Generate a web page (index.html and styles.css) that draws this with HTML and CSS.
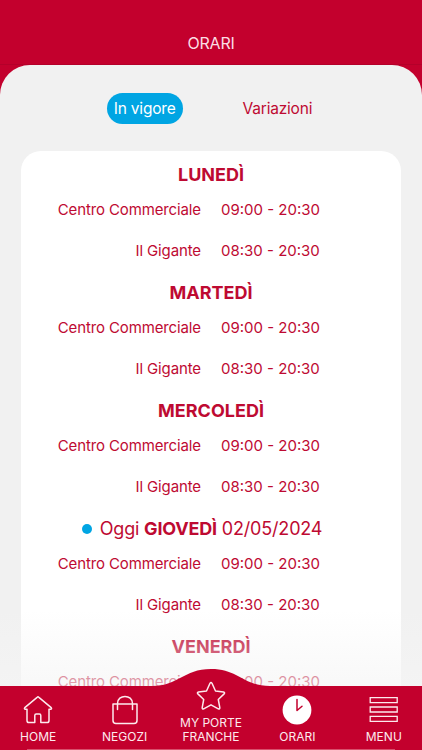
FILE: index.html
```html
<!DOCTYPE html>
<html lang="it">
<head>
    <meta charset="UTF-8">
    <meta name="viewport" content="width=device-width, initial-scale=1.0">
    <title>Orari</title>
    <link rel="stylesheet" href="styles.css">
</head>
<body>
    <header class="header">
        <h1>ORARI</h1>
    </header>
    <main class="content">
        <div class="tabs">
            <button class="tab active">In vigore</button>
            <button class="tab">Variazioni</button>
        </div>
        <div class="card">
            <section class="day">
                <h2>LUNEDÌ</h2>
                <div class="row"><span class="place">Centro Commerciale</span><span class="time">09:00 - 20:30</span></div>
                <div class="row"><span class="place">Il Gigante</span><span class="time">08:30 - 20:30</span></div>
            </section>
            <section class="day">
                <h2>MARTEDÌ</h2>
                <div class="row"><span class="place">Centro Commerciale</span><span class="time">09:00 - 20:30</span></div>
                <div class="row"><span class="place">Il Gigante</span><span class="time">08:30 - 20:30</span></div>
            </section>
            <section class="day">
                <h2>MERCOLEDÌ</h2>
                <div class="row"><span class="place">Centro Commerciale</span><span class="time">09:00 - 20:30</span></div>
                <div class="row"><span class="place">Il Gigante</span><span class="time">08:30 - 20:30</span></div>
            </section>
            <section class="day">
                <h2 class="today"><span class="dot"></span><span>Oggi <b>GIOVEDÌ</b> 02/05/2024</span></h2>
                <div class="row"><span class="place">Centro Commerciale</span><span class="time">09:00 - 20:30</span></div>
                <div class="row"><span class="place">Il Gigante</span><span class="time">08:30 - 20:30</span></div>
            </section>
            <section class="day">
                <h2>VENERDÌ</h2>
                <div class="row"><span class="place">Centro Commerciale</span><span class="time">09:00 - 20:30</span></div>
            </section>
        </div>
        <div class="fade"></div>
    </main>
    <nav class="navbar">
        <svg class="hump" width="118" height="19" viewBox="0 0 118 19">
            <path d="M0 19V18C27 18 31 1 59 1S91 18 118 18V19Z" fill="#c3002d"/>
        </svg>
        <div class="nav-items">
            <a class="nav-item">
                <svg width="30" height="30" viewBox="0 0 30 30">
                    <path d="M14.1 2.3 1.8 12.6Q.8 14 2.5 14.2H4V25.5Q4 27.6 6 27.6H11.8V20.5Q11.8 19 13.2 19H16.4Q17.8 19 17.8 20.5V27.6H24Q26 27.6 26 25.5V14.2H27.5Q29.2 14 28.2 12.6L15.9 2.3Q15 1.5 14.1 2.3Z"/>
                </svg>
                <span>HOME</span>
            </a>
            <a class="nav-item">
                <svg width="30" height="30" viewBox="0 0 30 30">
                    <path d="M3 9H27V25.5Q27 28.5 24 28.5H6Q3 28.5 3 25.5ZM7.5 14.5V8.5C7.5 -1 22.5 -1 22.5 8.5V14.5"/>
                </svg>
                <span>NEGOZI</span>
            </a>
            <a class="nav-item">
                <svg width="30" height="30" viewBox="0 0 30 30">
                    <path d="M14 2.3Q15 .6 16 2.3L19.5 10 27.5 11.1Q29.3 11.5 28.1 12.9L22.3 18.5 23.8 26.7Q23.9 28.5 22.3 27.8L15 23.8 7.7 27.8Q6.1 28.5 6.2 26.7L7.7 18.5 1.9 12.9Q.7 11.5 2.5 11.1L10.5 10Z"/>
                </svg>
                <span>MY PORTE<br>FRANCHE</span>
            </a>
            <a class="nav-item">
                <svg width="30" height="30" viewBox="0 0 30 30">
                    <circle cx="15" cy="15" r="14.4" class="clock-face"/>
                    <path d="M15 4.5V15.5L20 11.2" class="clock-hands"/>
                </svg>
                <span>ORARI</span>
            </a>
            <a class="nav-item">
                <svg width="30" height="30" viewBox="0 0 30 30">
                    <path class="bars" d="M1.2 2.7H28.2V7.7H1.2ZM1.2 12H28.2V17H1.2ZM1.2 21.3H28.2V26.3H1.2Z"/>
                </svg>
                <span>MENU</span>
            </a>
        </div>
    </nav>
</body>
</html>
```

FILE: styles.css
```css
* {
    box-sizing: border-box;
}
body {
    font-family: Inter, "Liberation Sans", sans-serif;
    background-color: #c3002d;
    color: #be0a32;
    display: flex;
    flex-direction: column;
    height: 100vh;
    margin: 0;
    overflow: hidden;
}
.header {
    height: 65px;
    flex: none;
    padding-top: 33px;
    text-align: center;
    color: #fbdde3;
    border-bottom: 1px solid #b4002a;
}
.header h1 {
    margin: 0;
    font-size: 16px;
    font-weight: 400;
    line-height: 21px;
    letter-spacing: -0.2px;
}
.content {
    position: relative;
    flex: 1;
    min-height: 0;
    overflow: hidden;
    background-color: #f1f1f1;
    border-radius: 30px 30px 0 0;
    padding: 28px 21px 0;
}
.tabs {
    display: flex;
    justify-content: center;
    gap: 53px;
    margin-bottom: 27px;
    padding-left: 4px;
}
.tab {
    font-family: inherit;
    font-size: 15.5px;
    letter-spacing: -0.2px;
    line-height: 31px;
    height: 31px;
    padding: 0 7px;
    border: none;
    border-radius: 16px;
    background: none;
    color: #be0a32;
    cursor: pointer;
}
.tab.active {
    background-color: #00a5e3;
    color: white;
}
.card {
    background-color: white;
    border-radius: 20px;
    padding-top: 9px;
    height: 620px;
}
.day {
    margin-bottom: 7px;
}
.day h2 {
    margin: 0;
    font-size: 18px;
    font-weight: 700;
    line-height: 29px;
    text-align: center;
}
.day h2.today {
    display: flex;
    justify-content: center;
    align-items: center;
    gap: 8px;
    font-weight: 400;
    letter-spacing: -0.18px;
    padding-right: 18px;
}
.dot {
    width: 10px;
    height: 10px;
    border-radius: 50%;
    background-color: #00a5e3;
}
.row {
    display: grid;
    grid-template-columns: 180px 1fr;
    gap: 20px;
    font-size: 15px;
    line-height: 41px;
}
.place {
    text-align: right;
    letter-spacing: -0.12px;
}
.fade {
    position: absolute;
    left: 0;
    right: 0;
    bottom: 0;
    height: 76px;
    background: linear-gradient(rgba(245, 245, 245, 0), rgba(245, 245, 245, 0.65));
}
.navbar {
    position: relative;
    flex: none;
    height: 64px;
    background-color: #c3002d;
    color: #fdeaee;
}
.navbar::after {
    content: "";
    position: absolute;
    left: 27px;
    right: 27px;
    bottom: 0;
    height: 1px;
    background-color: #d8506c;
}
.hump {
    position: absolute;
    top: -18px;
    left: 152px;
}
.nav-items {
    position: relative;
    display: grid;
    grid-template-columns: repeat(5, 1fr);
    grid-template-rows: 64px;
    margin: 0 -5px;
}
.nav-item {
    display: flex;
    flex-direction: column;
    align-items: center;
    justify-content: flex-end;
    gap: 5px;
    padding-bottom: 6px;
    font-size: 12px;
    line-height: 14px;
    text-align: center;
    cursor: pointer;
}
.nav-item svg {
    flex: none;
    fill: none;
    stroke: #fdeaee;
    stroke-width: 1.5;
    stroke-linejoin: round;
    stroke-linecap: round;
}
.nav-item .clock-face {
    fill: white;
    stroke: none;
}
.nav-item .clock-hands {
    stroke: #c3002d;
}
.nav-item .bars {
    stroke-width: 1.3;
    stroke-linejoin: miter;
}
```
